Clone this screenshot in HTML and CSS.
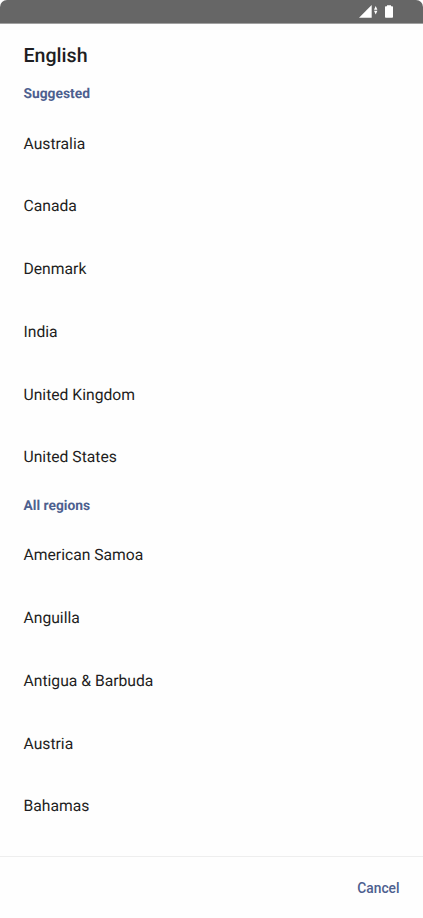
FILE: index.html
```html
<!DOCTYPE html>
<html lang="en">
<head>
<meta charset="utf-8">
<title>English</title>
<link rel="stylesheet" href="styles.css">
</head>
<body>
<div class="screen">
  <div class="status">
    <svg class="status-icons" width="40" height="16" viewBox="0 0 40 16" fill="#fff">
      <path d="M2 13.700 14.700 1V13.700z"/>
      <path d="M17 5.700 18.700 2 20.400 5.700zM17 6.800 18.700 10.500 20.400 6.800z"/>
      <path d="M28 3q0-.8.800-.8h1.200V1.200h4v1h1.200q.8 0 .8.800V13q0 .8-.8.800h-6.400q-.8 0-.8-.8z"/>
    </svg>
  </div>
  <main class="dialog">
    <h1>English</h1>
    <h2>Suggested</h2>
    <ul>
      <li>Australia</li>
      <li>Canada</li>
      <li>Denmark</li>
      <li>India</li>
      <li>United Kingdom</li>
      <li>United States</li>
    </ul>
    <h2 class="all">All regions</h2>
    <ul>
      <li>American Samoa</li>
      <li>Anguilla</li>
      <li>Antigua &amp; Barbuda</li>
      <li>Austria</li>
      <li>Bahamas</li>
    </ul>
  </main>
  <footer><button type="button">Cancel</button></footer>
</div>
</body>
</html>
```
FILE: styles.css
```css
* { box-sizing: border-box; }
body { margin: 0; background: #fefefe; color: #1e1e22; font-family: Roboto, sans-serif; text-rendering: geometricPrecision; }
.screen { display: flex; flex-direction: column; height: 918px; overflow: hidden; }
.status { flex: none; height: 24px; background: #666; border-bottom: 1px solid #a0a0a0; border-radius: 7px 7px 0 0; display: flex; justify-content: flex-end; align-items: flex-start; padding: 4px 26px 0 0; }
.status-icons { display: block; }
.dialog { flex: 1; min-height: 0; padding: 18px 23.5px 0; }
h1 { margin: 0; font-size: 19.6px; line-height: 28px; font-weight: 500; }
h2 { margin: 0; padding-top: 14px; height: 42.6px; font-size: 13.8px; line-height: 20px; font-weight: 700; color: #4d608f; }
.all { padding-top: 6.5px; height: 35.2px; }
ul { margin: 0; padding: 0; list-style: none; }
li { height: 62.77px; line-height: 62.77px; font-size: 15.7px; }
footer { flex: none; height: 62px; border-top: 1px solid #eee; display: flex; justify-content: flex-end; align-items: center; padding: 1px 23.5px 0; }
button { border: 0; padding: 0; background: none; color: #4d608f; font: 500 13.8px/20px Roboto, sans-serif; }
```
